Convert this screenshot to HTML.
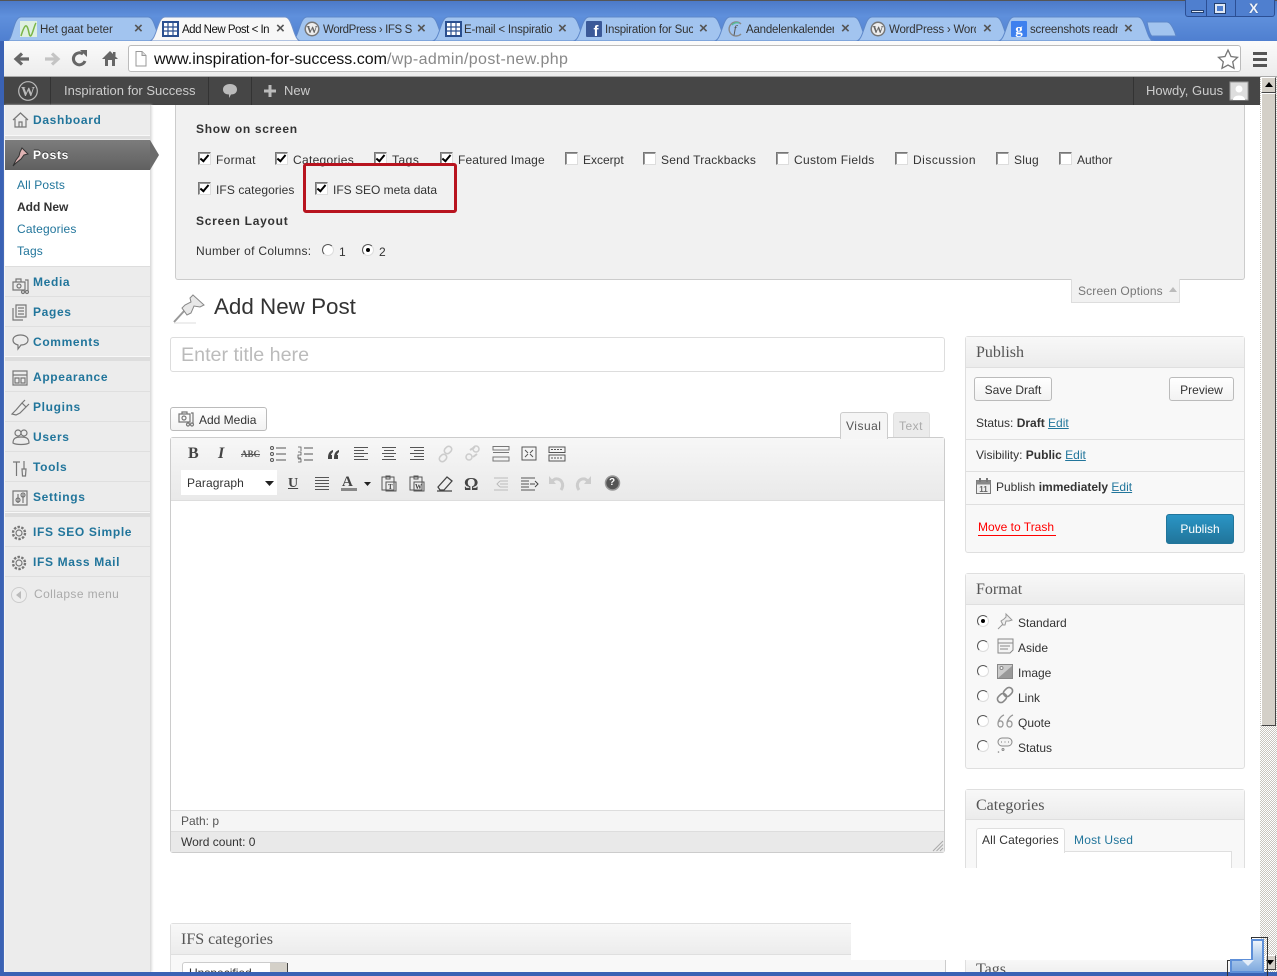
<!DOCTYPE html>
<html><head><meta charset="utf-8"><title>Add New Post</title>
<style>
html,body{margin:0;padding:0;width:1277px;height:976px;overflow:hidden;background:#fff}
body{position:relative;font:12px/14px "Liberation Sans",Arial,sans-serif;color:#333}
.a,.t,.s,.c,.r,.b,.m{position:absolute}
.t,.s,.m{white-space:nowrap}
.s{font:16px/20px "Liberation Serif",serif;color:#555}
.l{color:#21759b}
.u{text-decoration:underline}
.m{left:33px;font-weight:bold;color:#21759b;letter-spacing:.65px}
.sub{left:17px;color:#21759b;letter-spacing:.15px}
.sep{position:absolute;left:5px;width:145px;height:1px;background:#dfdfdf}
.c{width:11px;height:11px;background:#fff;border:1px solid;border-color:#777 #ddd #ddd #777;box-shadow:inset 1px 1px 0 #999}
.c.on::after{content:"";position:absolute;left:3px;top:0;width:3px;height:7px;border:solid #000;border-width:0 2px 2px 0;transform:rotate(40deg)}
.r{width:10px;height:10px;border-radius:50%;background:#fff;border:1px solid;border-color:#555 #ddd #ddd #555}
.r.on::after{content:"";position:absolute;left:3px;top:3px;width:4px;height:4px;border-radius:50%;background:#000}
.b{box-sizing:border-box;background:linear-gradient(#fff,#f2f2f2);border:1px solid #bbb;border-radius:3px;text-align:center;color:#333}
.box{position:absolute;box-sizing:border-box;background:#f8f8f8;border:1px solid #dfdfdf;border-radius:3px}
.hd{position:absolute;left:0;right:0;top:0;height:30px;background:linear-gradient(#f8f8f8,#ececec);border-bottom:1px solid #dfdfdf;box-sizing:border-box}
.ln{position:absolute;height:1px;background:#dfdfdf}
svg{position:absolute;overflow:visible}
.tt{position:absolute;top:23px;height:14px;overflow:hidden;white-space:nowrap;color:#333;font-size:11.5px;letter-spacing:-.2px}
.x{position:absolute;top:20px;font:bold 15px/17px "Liberation Sans",sans-serif;color:#555}
.i{fill:none;stroke:#777;stroke-width:1.2}
</style></head><body>

<!-- window frame -->
<div class="a" style="left:0;top:0;width:1277px;height:41px;background:linear-gradient(#4b78c6,#5f90dc 40%,#4f7fd0)"></div>
<div class="a" style="left:0;top:0;width:1277px;height:1px;background:#555"></div>
<div class="a" style="left:0;top:41px;width:4px;height:935px;background:#3a62b4"></div>
<div class="a" style="left:0;top:972px;width:1277px;height:4px;background:#3a62b4;z-index:8"></div>

<!-- window controls -->
<div class="a" style="left:1185px;top:0;width:90px;height:17px;background:#4f7fcf;border:1px solid #2c4f94;border-top:0;box-sizing:border-box;border-radius:0 0 3px 3px"></div>
<div class="a" style="left:1206px;top:0;width:1px;height:17px;background:#2c4f94"></div>
<div class="a" style="left:1235px;top:0;width:1px;height:17px;background:#2c4f94"></div>
<div class="a" style="left:1191px;top:10px;width:11px;height:1px;background:#dfe8f5;border:1px solid #24406f"></div>
<div class="a" style="left:1215px;top:4px;width:6px;height:5px;border:2px solid #dfe8f5;outline:1px solid #24406f"></div>
<div class="t" style="left:1249px;top:1px;font:bold 14px/14px 'Liberation Sans',sans-serif;color:#eef3fb;text-shadow:0 0 1px #24406f">X</div>

<!-- tabs -->
<svg style="left:0;top:0" width="1277" height="42">
<g fill="#a2c4ef" stroke="#5d87c9">
<path d="M7 41C13 41 13 17 21 17H148C156 17 156 41 164 41Z"/>
<path d="M291 41C299 41 299 17 307 17H431C439 17 439 41 447 41Z"/>
<path d="M432 41C440 41 440 17 448 17H572C580 17 580 41 588 41Z"/>
<path d="M573 41C581 41 581 17 589 17H713C721 17 721 41 729 41Z"/>
<path d="M714 41C722 41 722 17 730 17H854C862 17 862 41 870 41Z"/>
<path d="M856 41C864 41 864 17 872 17H996C1004 17 1004 41 1012 41Z"/>
<path d="M998 41C1006 41 1006 17 1014 17H1138C1146 17 1146 41 1154 41Z"/>
<path d="M1147 22H1167C1171 22 1175 32 1176 36H1152C1149 34 1148 26 1147 22Z"/>
<path fill="#f7f7f7" stroke="#6b8fcb" d="M149 41C157 41 157 17 165 17H285C293 17 293 41 301 41Z"/>
</g></svg>
<!-- favicons -->
<svg style="left:20px;top:21px" width="17" height="16"><rect width="17" height="16" fill="#dff0e0"/><path d="M1 15C5 2 7 2 9 12S14 4 16 2" fill="none" stroke="#7ab648" stroke-width="1.5"/></svg>
<svg style="left:162px;top:21px" width="17" height="16"><rect width="17" height="16" fill="#2a4f8f"/><path d="M2 2h13v12H2z" fill="#fff"/><path d="M2 6h13M2 10h13M6 2v12M11 2v12" stroke="#2a4f8f" stroke-width="1.2"/></svg>
<svg style="left:304px;top:21px" width="16" height="16"><circle cx="8" cy="8" r="7.5" fill="#777"/><circle cx="8" cy="8" r="6" fill="#eee"/><text x="8" y="12" font-family="Liberation Serif" font-size="11" font-weight="bold" text-anchor="middle" fill="#666">W</text></svg>
<svg style="left:445px;top:21px" width="17" height="16"><rect width="17" height="16" fill="#2a4f8f"/><path d="M2 2h13v12H2z" fill="#fff"/><path d="M2 6h13M2 10h13M6 2v12M11 2v12" stroke="#2a4f8f" stroke-width="1.2"/></svg>
<svg style="left:586px;top:21px" width="16" height="16"><rect width="16" height="16" rx="1" fill="#3b5998"/><text x="10" y="15" font-family="Liberation Sans" font-size="15" font-weight="bold" text-anchor="middle" fill="#fff">f</text></svg>
<svg style="left:727px;top:21px" width="16" height="16"><path d="M14 3A7 7 0 1 0 14 13" fill="none" stroke="#888" stroke-width="1.4"/><path d="M12 2A7 7 0 0 0 5 4" fill="none" stroke="#5b9" stroke-width="1.4"/><text x="8" y="12" font-family="Liberation Serif" font-style="italic" font-size="12" text-anchor="middle" fill="#555">f</text></svg>
<svg style="left:870px;top:21px" width="16" height="16"><circle cx="8" cy="8" r="7.5" fill="#777"/><circle cx="8" cy="8" r="6" fill="#eee"/><text x="8" y="12" font-family="Liberation Serif" font-size="11" font-weight="bold" text-anchor="middle" fill="#666">W</text></svg>
<svg style="left:1011px;top:21px" width="16" height="16"><rect width="16" height="16" rx="1" fill="#3d80ee"/><text x="8" y="13" font-family="Liberation Serif" font-size="15" font-weight="bold" text-anchor="middle" fill="#fff">g</text></svg>

<div class="tt" style="left:40px;width:74px;letter-spacing:0">Het gaat beter</div><div class="x" style="left:134px">×</div>
<div class="tt" style="left:182px;width:87px;color:#111;letter-spacing:-.5px">Add New Post &lt; Inspiration</div><div class="x" style="left:276px">×</div>
<div class="tt" style="left:323px;width:89px;letter-spacing:-.4px">WordPress › IFS SEO</div><div class="x" style="left:417px">×</div>
<div class="tt" style="left:464px;width:88px">E-mail &lt; Inspiration for</div><div class="x" style="left:558px">×</div>
<div class="tt" style="left:605px;width:88px">Inspiration for Success</div><div class="x" style="left:699px">×</div>
<div class="tt" style="left:746px;width:88px">Aandelenkalender, beurs</div><div class="x" style="left:841px">×</div>
<div class="tt" style="left:889px;width:87px">WordPress › WordPress</div><div class="x" style="left:983px">×</div>
<div class="tt" style="left:1030px;width:88px">screenshots readme</div><div class="x" style="left:1124px">×</div>

<!-- toolbar -->
<div class="a" style="left:4px;top:41px;width:1273px;height:36px;background:linear-gradient(#fbfbfb,#ececec);border-bottom:1px solid #aaa;box-sizing:border-box"></div>
<svg style="left:0;top:41px" width="130" height="36">
<path d="M29 18H18M22 12.500L16 18L22 23.500" fill="none" stroke="#666" stroke-width="3.2"/>
<path d="M45 18H56M52 12.500L58 18L52 23.500" fill="none" stroke="#c4c4c4" stroke-width="3.2"/>
<path d="M85 20A6 6 0 1 1 83 13" fill="none" stroke="#666" stroke-width="3"/><path d="M80 9H87V16Z" fill="#666"/>
<path d="M102 18L110 10L118 18H115V25H112V19H108V25H105V18Z" fill="#666"/><rect x="113" y="11" width="2.5" height="4" fill="#666"/>
</svg>
<div class="a" style="left:128px;top:45px;width:1113px;height:27px;background:#fff;border:1px solid #bbb;border-radius:3px;box-sizing:border-box"></div>
<svg style="left:135px;top:51px" width="12" height="16"><path d="M1 .5H7L11 4.500V15H1Z" fill="#fff" stroke="#999"/><path d="M7 .5V4.500H11" fill="#ddd" stroke="#999"/></svg>
<div class="t" style="left:154px;top:50px;font-size:16px;line-height:20px;color:#111">www.inspiration-for-success.com<span style="color:#888;letter-spacing:.36px">/wp-admin/post-new.php</span></div>
<svg style="left:1217px;top:49px" width="22" height="20"><path d="M11 1L14 7.500L20.500 8.300L15.700 12.800L17 19.300L11 16L5 19.300L6.300 12.800L1.500 8.300L8 7.500Z" fill="#fff" stroke="#777" stroke-width="1.300"/></svg>
<svg style="left:1253px;top:52px" width="14" height="15"><path d="M0 0h14v3H0zM0 6h14v3H0zM0 12h14v3H0z" fill="#555"/></svg>

<!-- admin bar -->
<div class="a" style="left:4px;top:77px;width:1257px;height:28px;background:#464646"></div>
<div class="a" style="left:50px;top:77px;width:1px;height:28px;background:#333"></div>
<div class="a" style="left:208px;top:77px;width:1px;height:28px;background:#333"></div>
<div class="a" style="left:251px;top:77px;width:1px;height:28px;background:#333"></div>
<div class="a" style="left:1133px;top:77px;width:1px;height:28px;background:#333"></div>
<svg style="left:18px;top:81px" width="20" height="20"><circle cx="10" cy="10" r="9.300" fill="none" stroke="#bbb" stroke-width="1.200"/><text x="10" y="15" font-family="Liberation Serif" font-size="14" font-weight="bold" text-anchor="middle" fill="#bbb">W</text></svg>
<div class="t" style="left:64px;top:84px;font-size:13px;color:#ccc">Inspiration for Success</div>
<svg style="left:222px;top:83px" width="16" height="16"><path d="M8 1C12 1 15 3 15 6.500C15 10 12 11.500 9 11.500L7 15V11.500C4 11.500 1 10 1 6.500C1 3 4 1 8 1Z" fill="#bbb"/></svg>
<svg style="left:264px;top:85px" width="12" height="12"><path d="M4.500 0h3v4.500H12v3H7.500V12h-3V7.500H0v-3h4.500z" fill="#bbb"/></svg>
<div class="t" style="left:284px;top:84px;font-size:13px;color:#ccc">New</div>
<div class="t" style="left:1146px;top:84px;font-size:13px;color:#ccc">Howdy, Guus</div>
<svg style="left:1230px;top:82px" width="18" height="18"><rect width="18" height="18" fill="#ddd" stroke="#999"/><circle cx="9" cy="7" r="3.500" fill="#fff"/><path d="M3 18C3 12 15 12 15 18Z" fill="#fff"/></svg>

<!-- scrollbar -->
<div class="a" style="left:1260px;top:77px;width:17px;height:895px;background:conic-gradient(#fff 25%,#c9c6be 0 50%,#fff 0 75%,#c9c6be 0) 0 0/2px 2px"></div>
<div class="a" style="left:1261px;top:77px;width:15px;height:16px;background:#d4d0c8;box-sizing:border-box;border:1px solid;border-color:#fff #444 #444 #fff"></div>
<svg style="left:1265px;top:82px" width="8" height="5"><path d="M0 5L4 0L8 5Z" fill="#000"/></svg>
<div class="a" style="left:1261px;top:93px;width:15px;height:633px;background:#d4d0c8;box-sizing:border-box;border:1px solid;border-color:#fff #444 #444 #fff"></div>

<!-- sidebar -->
<div class="a" style="left:4px;top:105px;width:146px;height:867px;background:#ececec;border-right:1px solid #ddd;box-shadow:1px 0 2px #ddd"></div>
<div class="a" style="left:4px;top:105px;width:1px;height:867px;background:#f5f5f5"></div>
<div class="a" style="left:5px;top:135px;width:145px;height:4px;background:#ddd;border-top:1px solid #f8f8f8;box-sizing:border-box"></div>
<div class="a" style="left:5px;top:140px;width:145px;height:30px;background:linear-gradient(#7c7c7c,#606060)"></div>
<svg style="left:150px;top:140px" width="10" height="30"><path d="M0 0L9 15L0 30Z" fill="#6c6c6c"/></svg>
<div class="a" style="left:5px;top:170px;width:145px;height:96px;background:#fff"></div>
<div class="sep" style="top:266px;background:#ddd"></div>
<div class="sep" style="top:296px"></div><div class="sep" style="top:326px"></div>
<div class="a" style="left:5px;top:356px;width:145px;height:5px;background:#ddd;border-top:1px solid #f8f8f8;box-sizing:border-box"></div>
<div class="sep" style="top:391px"></div><div class="sep" style="top:421px"></div><div class="sep" style="top:451px"></div><div class="sep" style="top:481px"></div><div class="sep" style="top:511px"></div>
<div class="a" style="left:5px;top:512px;width:145px;height:5px;background:#ddd;border-top:1px solid #f8f8f8;box-sizing:border-box"></div>
<div class="sep" style="top:546px"></div><div class="sep" style="top:576px"></div>

<div class="m" style="top:113px">Dashboard</div>
<div class="m" style="top:148px;color:#fff;text-shadow:0 -1px 0 #333">Posts</div>
<div class="t sub" style="top:178px">All Posts</div>
<div class="t" style="left:17px;top:200px;font-weight:bold;color:#333">Add New</div>
<div class="t sub" style="top:222px">Categories</div>
<div class="t sub" style="top:244px">Tags</div>
<div class="m" style="top:275px">Media</div>
<div class="m" style="top:305px">Pages</div>
<div class="m" style="top:335px">Comments</div>
<div class="m" style="top:370px">Appearance</div>
<div class="m" style="top:400px">Plugins</div>
<div class="m" style="top:430px">Users</div>
<div class="m" style="top:460px">Tools</div>
<div class="m" style="top:490px">Settings</div>
<div class="m" style="top:525px">IFS SEO Simple</div>
<div class="m" style="top:555px">IFS Mass Mail</div>
<div class="t" style="left:34px;top:587px;color:#aaa;letter-spacing:.4px">Collapse menu</div>

<svg style="left:0;top:0" width="30" height="610">
<g class="i">
<path d="M13 120L20.500 113L28 120M15 119V127H26V119M19 127V122H22V127"/>
<path d="M13 282H25V290H13ZM16 282V279H21V282"/><circle cx="19" cy="286" r="2"/><circle cx="23" cy="292" r="1.500"/><circle cx="27" cy="292" r="1.500"/><path d="M25 280H28V291"/>
<path d="M16 305H26V317H16ZM13 308V320H23M18 308H24M18 311H24M18 314H24"/>
<path d="M20.500 335C25 335 28 337 28 340C28 343 25 345 21 345L18 349V345C15 344 13 343 13 340C13 337 16 335 20.500 335Z"/>
<path d="M13 371H27V385H13ZM13 375H27M15 378H19V383H15ZM21 378H25V383H21Z"/>
<path d="M12 414L16 410L22 403L26 407L20 413L16 415ZM22 403L25 400M26 407L29 404"/>
<circle cx="18" cy="433" r="3"/><circle cx="24" cy="433" r="3"/><path d="M13 443C13 438 16 437 21 437C26 437 29 438 29 443C26 445 16 445 13 443Z"/>
<path d="M13 462H20M16.500 462V476M24 461V469M22 469H26L25.500 476H22.500Z"/>
<path d="M13 491H27V505H13ZM18 494V503M23 494V503"/><circle cx="18" cy="500" r="2"/><circle cx="23" cy="495" r="2"/>
<circle cx="19" cy="533" r="3"/><circle cx="19" cy="533" r="6" stroke-dasharray="2.400 1.400" stroke-width="2.400"/>
<circle cx="19" cy="563" r="3"/><circle cx="19" cy="563" r="6" stroke-dasharray="2.400 1.400" stroke-width="2.400"/>
</g>
<path d="M22 148L28 154L24 155L21 159L16 163L13 166L16 160L19 156L20 152Z" fill="#e0b4b4" stroke="#333"/>
<circle cx="19" cy="595" r="7.500" fill="#eee" stroke="#ccc"/><path d="M16 595L21 591V599Z" fill="#bbb"/>
</svg>

<!-- screen options -->
<div class="a" style="left:175px;top:105px;width:1070px;height:175px;background:#f1f1f1;border:1px solid #ccc;border-top:0;box-sizing:border-box;border-radius:0 0 3px 3px"></div>
<div class="t" style="left:196px;top:122px;font-weight:bold;letter-spacing:.7px">Show on screen</div>
<div class="c on" style="left:198px;top:152px"></div><div class="t" style="left:216px;top:153px;letter-spacing:.3px">Format</div>
<div class="c on" style="left:275px;top:152px"></div><div class="t" style="left:293px;top:153px;letter-spacing:.3px">Categories</div>
<div class="c on" style="left:374px;top:152px"></div><div class="t" style="left:392px;top:153px;letter-spacing:.5px">Tags</div>
<div class="c on" style="left:440px;top:152px"></div><div class="t" style="left:458px;top:153px;letter-spacing:.15px">Featured Image</div>
<div class="c" style="left:565px;top:152px"></div><div class="t" style="left:583px;top:153px">Excerpt</div>
<div class="c" style="left:643px;top:152px"></div><div class="t" style="left:661px;top:153px;letter-spacing:.2px">Send Trackbacks</div>
<div class="c" style="left:776px;top:152px"></div><div class="t" style="left:794px;top:153px;letter-spacing:.3px">Custom Fields</div>
<div class="c" style="left:895px;top:152px"></div><div class="t" style="left:913px;top:153px;letter-spacing:.5px">Discussion</div>
<div class="c" style="left:996px;top:152px"></div><div class="t" style="left:1014px;top:153px;letter-spacing:.2px">Slug</div>
<div class="c" style="left:1059px;top:152px"></div><div class="t" style="left:1077px;top:153px">Author</div>
<div class="c on" style="left:198px;top:182px"></div><div class="t" style="left:216px;top:183px;letter-spacing:.08px">IFS categories</div>
<div class="c on" style="left:315px;top:182px"></div><div class="t" style="left:333px;top:183px">IFS SEO meta data</div>
<div class="a" style="left:303px;top:163px;width:154px;height:50px;box-sizing:border-box;border:3px solid #b8141f;border-radius:3px"></div>
<div class="t" style="left:196px;top:214px;font-weight:bold;letter-spacing:.75px">Screen Layout</div>
<div class="t" style="left:196px;top:244px;letter-spacing:.3px">Number of Columns:</div>
<div class="r" style="left:322px;top:244px"></div><div class="t" style="left:339px;top:245px">1</div>
<div class="r on" style="left:362px;top:244px"></div><div class="t" style="left:379px;top:245px">2</div>
<div class="a" style="left:1071px;top:279px;width:109px;height:24px;background:#f1f1f1;border:1px solid #ddd;border-top:0;box-sizing:border-box"></div>
<div class="t" style="left:1078px;top:284px;color:#777;letter-spacing:.15px">Screen Options</div>
<svg style="left:1169px;top:287px" width="8" height="5"><path d="M0 5L4 0L8 5Z" fill="#bbb"/></svg>

<!-- heading -->
<svg style="left:172px;top:293px" width="34" height="32">
<path d="M2 29L13 17" stroke="#999" stroke-width="2"/>
<path d="M21 2L32 12L28 14L22 13L19 20L15 22L10 15L13 12L19 9L18 5Z" fill="#e8e8e8" stroke="#888"/>
<path d="M2 30H24" stroke="#ddd"/>
</svg>
<div class="t" style="left:214px;top:293px;font-size:22.400px;line-height:28px;color:#333">Add New Post</div>
<div class="a" style="left:170px;top:337px;width:775px;height:35px;background:#fff;border:1px solid #ddd;border-radius:3px;box-sizing:border-box"></div>
<div class="t" style="left:181px;top:343px;font-size:19.700px;line-height:24px;color:#bbb">Enter title here</div>

<!-- editor -->
<div class="b" style="left:170px;top:407px;width:97px;height:24px"></div>
<svg style="left:178px;top:411px" width="16" height="16"><g class="i"><path d="M1 3H12V11H1ZM4 3V1H9V3"/><circle cx="6" cy="7" r="2"/><circle cx="10" cy="13.500" r="1.500"/><circle cx="14" cy="13.500" r="1.500"/><path d="M13 2H15V13"/></g></svg>
<div class="t" style="left:199px;top:413px">Add Media</div>
<div class="a" style="left:893px;top:412px;width:37px;height:26px;background:#ebebeb;border:1px solid #dfdfdf;box-sizing:border-box;border-radius:3px 3px 0 0"></div>
<div class="t" style="left:899px;top:419px;color:#aaa;letter-spacing:.5px">Text</div>
<div class="a" style="left:840px;top:412px;width:48px;height:27px;background:#f5f5f5;border:1px solid #ccc;border-bottom:0;box-sizing:border-box;border-radius:3px 3px 0 0;z-index:2"></div>
<div class="t" style="left:846px;top:419px;z-index:3;color:#555;letter-spacing:.5px">Visual</div>
<div class="a" style="left:170px;top:437px;width:775px;height:416px;background:#fff;border:1px solid #ccc;box-sizing:border-box;border-radius:3px"></div>
<div class="a" style="left:171px;top:438px;width:773px;height:62px;background:linear-gradient(#f7f7f7,#e9e9e9);border-bottom:1px solid #ddd"></div>
<div class="a" style="left:171px;top:810px;width:773px;height:21px;background:#f5f5f5;border-top:1px solid #ddd;box-sizing:border-box"></div>
<div class="a" style="left:171px;top:831px;width:773px;height:21px;background:#e9e9e9;border-top:1px solid #ddd;box-sizing:border-box"></div>
<div class="t" style="left:181px;top:814px;color:#555">Path: p</div>
<div class="t" style="left:181px;top:835px;color:#333">Word count: 0</div>
<svg style="left:932px;top:840px" width="12" height="12"><path d="M11 1L1 11M11 4.500L4.500 11M11 8L8 11" stroke="#aaa"/></svg>

<!-- mce toolbar -->
<div class="t" style="left:188px;top:446px;font:bold 16px/16px 'Liberation Serif',serif;color:#444">B</div>
<div class="t" style="left:218px;top:446px;font:italic bold 16px/16px 'Liberation Serif',serif;color:#444">I</div>
<div class="t" style="left:241px;top:449px;font:bold 9px/11px 'Liberation Serif',serif;color:#555;text-decoration:line-through">ABC</div>
<svg style="left:0;top:0" width="640" height="500">
<g fill="none" stroke="#555">
<path d="M276 448H286M276 454H286M276 460H286"/><circle cx="272" cy="448" r="1.500"/><circle cx="272" cy="454" r="1.500"/><circle cx="272" cy="460" r="1.500"/>
<path d="M304 448H313M304 454H313M304 460H313"/><path d="M298 447H301V451M298 452H301V455H298V458H301M298 459H301V462H298" stroke-width=".8"/>
<path d="M354 447.500H368M354 450.500H364M354 453.500H368M354 456.500H364M354 459.500H368"/>
<path d="M382 447.500H396M384 450.500H394M382 453.500H396M384 456.500H394M382 459.500H396"/>
<path d="M410 447.500H424M414 450.500H424M410 453.500H424M414 456.500H424M410 459.500H424"/>
<path d="M493 446.500H509V450H493ZM493 452.500H509M493 457H509V461H493Z" stroke="#777"/>
<path d="M522 447H536V460H522ZM525 450L528 453M533 450L530 453M525 457L528 454M533 457L530 454" stroke="#555"/>
<path d="M549 447H565V452.500H549ZM549 455H565V461H549Z"/><path d="M551 449.500H563M551 458H563" stroke-dasharray="2 1"/>
<path d="M315 477.500H329M315 480.500H329M315 483.500H329M315 486.500H329M315 489.500H329"/>
<path d="M382 477H394V490H382ZM386 476H390V479H386ZM386 482H396V491H386Z"/>
<path d="M410 477H422V490H410ZM414 476H418V479H414ZM414 482H424V491H414Z"/>
<path d="M494 478H508M500 481H508M500 484H508M500 487H508M494 490H508" stroke="#bbb"/>
<path d="M521 478H535M521 481H529M521 484H529M521 487H529M521 490H535" stroke="#555"/>
</g>
<path d="M328 458C328 453 330 451 333 450V452C332 453 331 454 331 455H332V459H328ZM334 458C334 453 336 451 339 450V452C338 453 337 454 337 455H338V459H334Z" fill="#444"/>
<g fill="none" stroke="#ccc" stroke-width="1.600"><rect x="440" y="454" width="6" height="8" rx="3" transform="rotate(45 443 458)"/><rect x="445" y="446" width="6" height="8" rx="3" transform="rotate(45 448 450)"/></g>
<path d="M470 450L475 447M477 454L473 457" stroke="#ccc" stroke-width="2"/><circle cx="476" cy="449" r="3" fill="none" stroke="#ccc" stroke-width="1.500"/><circle cx="469" cy="457" r="3" fill="none" stroke="#ccc" stroke-width="1.500"/>
<path d="M364 482H371L367.500 486Z" fill="#222"/>
<rect x="341" y="488" width="16" height="3" fill="#888"/>
<path d="M438 487L447 477L452 481L444 490H440ZM437 491H452" fill="#eee" stroke="#444" stroke-width="1.300"/>
<path d="M505 484H500M500 481L497 484L500 487" fill="none" stroke="#bbb"/>
<path d="M530 484H535M535 481L538 484L535 487" fill="none" stroke="#444"/>
<path d="M561 490C565 484 561 478 555 479L552 481" fill="none" stroke="#ccc" stroke-width="3"/><path d="M549 476V484H556Z" fill="#ccc"/>
<path d="M579 490C575 484 579 478 585 479L588 481" fill="none" stroke="#ccc" stroke-width="3"/><path d="M591 476V484H584Z" fill="#ccc"/>
<circle cx="612.500" cy="483" r="7" fill="#555" stroke="#999" stroke-width="1.500"/>
</svg>
<div class="a" style="left:181px;top:470px;width:96px;height:25px;background:#fff"></div>
<div class="t" style="left:187px;top:476px;color:#333;letter-spacing:.1px">Paragraph</div>
<svg style="left:265px;top:481px" width="9" height="5"><path d="M0 0H9L4.500 5Z" fill="#222"/></svg>
<div class="t" style="left:288px;top:476px;font:bold 14px/16px 'Liberation Serif',serif;color:#444;text-decoration:underline">U</div>
<div class="t" style="left:342px;top:474px;font:bold 15px/16px 'Liberation Serif',serif;color:#444">A</div>
<div class="t" style="left:464px;top:476px;font:bold 18px/16px 'Liberation Serif',serif;color:#444">Ω</div>
<div class="t" style="left:609px;top:477px;font:bold 10px/12px 'Liberation Sans',sans-serif;color:#fff">?</div>
<div class="t" style="left:388px;top:483px;font:bold 7px/8px 'Liberation Serif',serif;color:#444">T</div>
<div class="t" style="left:415px;top:483px;font:bold 7px/8px 'Liberation Serif',serif;color:#444">W</div>

<!-- publish -->
<div class="box" style="left:965px;top:336px;width:280px;height:217px"><div class="hd" style="height:31px"></div></div>
<div class="s" style="left:976px;top:343px">Publish</div>
<div class="b" style="left:974px;top:377px;width:78px;height:24px;line-height:24px">Save Draft</div>
<div class="b" style="left:1169px;top:377px;width:65px;height:24px;line-height:24px">Preview</div>
<div class="t" style="left:976px;top:416px">Status: <b>Draft</b> <span class="l u">Edit</span></div>
<div class="ln" style="left:966px;top:439px;width:278px"></div>
<div class="t" style="left:976px;top:448px">Visibility: <b>Public</b> <span class="l u">Edit</span></div>
<div class="ln" style="left:966px;top:471px;width:278px"></div>
<svg style="left:976px;top:478px" width="15" height="16"><rect x=".5" y="2.500" width="14" height="13" fill="#eee" stroke="#777"/><rect x=".5" y="2.500" width="14" height="4" fill="#888"/><path d="M4 0V4M11 0V4" stroke="#777" stroke-width="2"/><text x="7.500" y="14" font-family="Liberation Sans" font-size="8" font-weight="bold" text-anchor="middle" fill="#666">11</text></svg>
<div class="t" style="left:996px;top:480px">Publish <b>immediately</b> <span class="l u">Edit</span></div>
<div class="ln" style="left:966px;top:504px;width:278px"></div>
<div class="t" style="left:978px;top:520px;color:#f00;width:78px;height:15px;border-bottom:1px solid #f00">Move to Trash</div>
<div class="a" style="left:1166px;top:514px;width:68px;height:30px;background:linear-gradient(#2a95c5,#21759b);border:1px solid #21759b;border-radius:3px;box-sizing:border-box;color:#fff;text-align:center;line-height:28px">Publish</div>

<!-- format -->
<div class="box" style="left:965px;top:573px;width:280px;height:196px"><div class="hd" style="height:31px"></div></div>
<div class="s" style="left:976px;top:580px">Format</div>
<div class="r on" style="left:977px;top:615px"></div><div class="t" style="left:1018px;top:616px">Standard</div>
<div class="r" style="left:977px;top:640px"></div><div class="t" style="left:1018px;top:641px">Aside</div>
<div class="r" style="left:977px;top:665px"></div><div class="t" style="left:1018px;top:666px">Image</div>
<div class="r" style="left:977px;top:690px"></div><div class="t" style="left:1018px;top:691px">Link</div>
<div class="r" style="left:977px;top:715px"></div><div class="t" style="left:1018px;top:716px">Quote</div>
<div class="r" style="left:977px;top:740px"></div><div class="t" style="left:1018px;top:741px">Status</div>
<svg style="left:996px;top:612px" width="20" height="150">
<path d="M2 17L7 12M10 2L16 8L13 9L10 9L9 13L7 13L5 9L8 7L10 5Z" fill="#eee" stroke="#999"/>
<path d="M2 27H17V38L14 41H2ZM2 31H17M4 34H14M4 37H12" fill="#f4f4f4" stroke="#888"/>
<rect x="1.500" y="52.500" width="15" height="14" fill="#ccc" stroke="#888"/><path d="M2 66L9 60L16 54V66Z" fill="#999"/><circle cx="5.500" cy="56" r="1.500" fill="#fff" stroke="#888"/>
<g fill="none" stroke="#888" stroke-width="1.600"><rect x="2.500" y="81" width="7" height="10" rx="3.500" transform="rotate(45 6 86)"/><rect x="8.500" y="75" width="7" height="10" rx="3.500" transform="rotate(45 12 80)"/></g>
<g fill="none" stroke="#999" stroke-width="1.300"><path d="M8 103C5 104 2 108 2 112C2 116 7 116 7 112C7 109 4 108 2.500 110M17 103C14 104 11 108 11 112C11 116 16 116 16 112C16 109 13 108 11.500 110"/></g>
<rect x="2" y="126" width="14" height="8" rx="4" fill="#f4f4f4" stroke="#888"/><path d="M5 130H6M8.500 130H9.500M12 130H13" stroke="#777"/><circle cx="7" cy="137.500" r="1" fill="none" stroke="#888"/><circle cx="2.500" cy="140" r=".8" fill="#888"/>
</svg>

<!-- categories -->
<div class="box" style="left:965px;top:789px;width:280px;height:200px"><div class="hd" style="height:30px"></div></div>
<div class="s" style="left:976px;top:796px">Categories</div>
<div class="a" style="left:976px;top:851px;width:256px;height:40px;background:#fff;border:1px solid #dfdfdf;box-sizing:border-box"></div>
<div class="a" style="left:976px;top:828px;width:89px;height:25px;background:#fff;border:1px solid #dfdfdf;border-bottom:0;box-sizing:border-box;border-radius:3px 3px 0 0"></div>
<div class="t" style="left:982px;top:833px;letter-spacing:.15px">All Categories</div>
<div class="t l" style="left:1074px;top:833px;letter-spacing:.2px">Most Used</div>

<!-- IFS categories box -->
<div class="box" style="left:170px;top:923px;width:776px;height:60px;background:#f8f8f8"><div class="hd" style="height:31px"></div></div>
<div class="s" style="left:181px;top:930px">IFS categories</div>
<div class="a" style="left:182px;top:962px;width:106px;height:20px;background:#fff;border:1px solid #ccc;border-radius:3px;box-sizing:border-box"></div>
<div class="t" style="left:189px;top:966px">Unspecified</div>
<div class="a" style="left:270px;top:963px;width:17px;height:15px;background:#d4d0c8;border-right:1px solid #444"></div>

<!-- white repaint overlay -->
<div class="a" style="left:851px;top:868px;width:409px;height:92px;background:#fff;z-index:4"></div>
<div class="a" style="left:851px;top:960px;width:94px;height:12px;background:#f8f8f8;z-index:4"></div>
<div class="a" style="left:945px;top:960px;width:1px;height:12px;background:#ccc;z-index:4"></div>
<div class="a" style="left:946px;top:960px;width:19px;height:12px;background:#fff;z-index:4"></div>

<!-- tags box -->
<div class="a" style="left:965px;top:960px;width:280px;height:12px;background:linear-gradient(#f8f8f8,#f0f0f0);border:1px solid #dfdfdf;border-width:0 1px;box-sizing:border-box;z-index:5;overflow:hidden"><div class="s" style="left:10px;top:0">Tags</div></div>
<div class="a" style="left:1245px;top:960px;width:15px;height:12px;background:#fff;z-index:5"></div>

<!-- drag arrow artefact -->
<div class="a" style="left:1265px;top:955px;width:11px;height:15px;background:#d4d0c8;box-sizing:border-box;border:1px solid;border-color:#fff #444 #444 #fff;z-index:6"></div>
<svg style="left:1266px;top:960px;z-index:7" width="8" height="5"><path d="M0 0H8L4 5Z" fill="#000"/></svg>
<svg style="left:1227px;top:937px;z-index:9" width="41" height="39">
<defs><linearGradient id="g" x1="0" y1="0" x2="0" y2="1"><stop offset="0" stop-color="#f2f6fb"/><stop offset=".55" stop-color="#a9c8ec"/><stop offset="1" stop-color="#7fa9de"/></linearGradient></defs>
<path d="M.5 39V23.500H24.500V.5H40.500V39" fill="none" stroke="#333"/>
<path d="M4 35V23H25V3H36V35Z" fill="url(#g)" stroke="#5d8fd8" stroke-width="2"/>
<path d="M15 23L21 29L27 23Z" fill="#e4edf8"/>
</svg>
</body></html>
